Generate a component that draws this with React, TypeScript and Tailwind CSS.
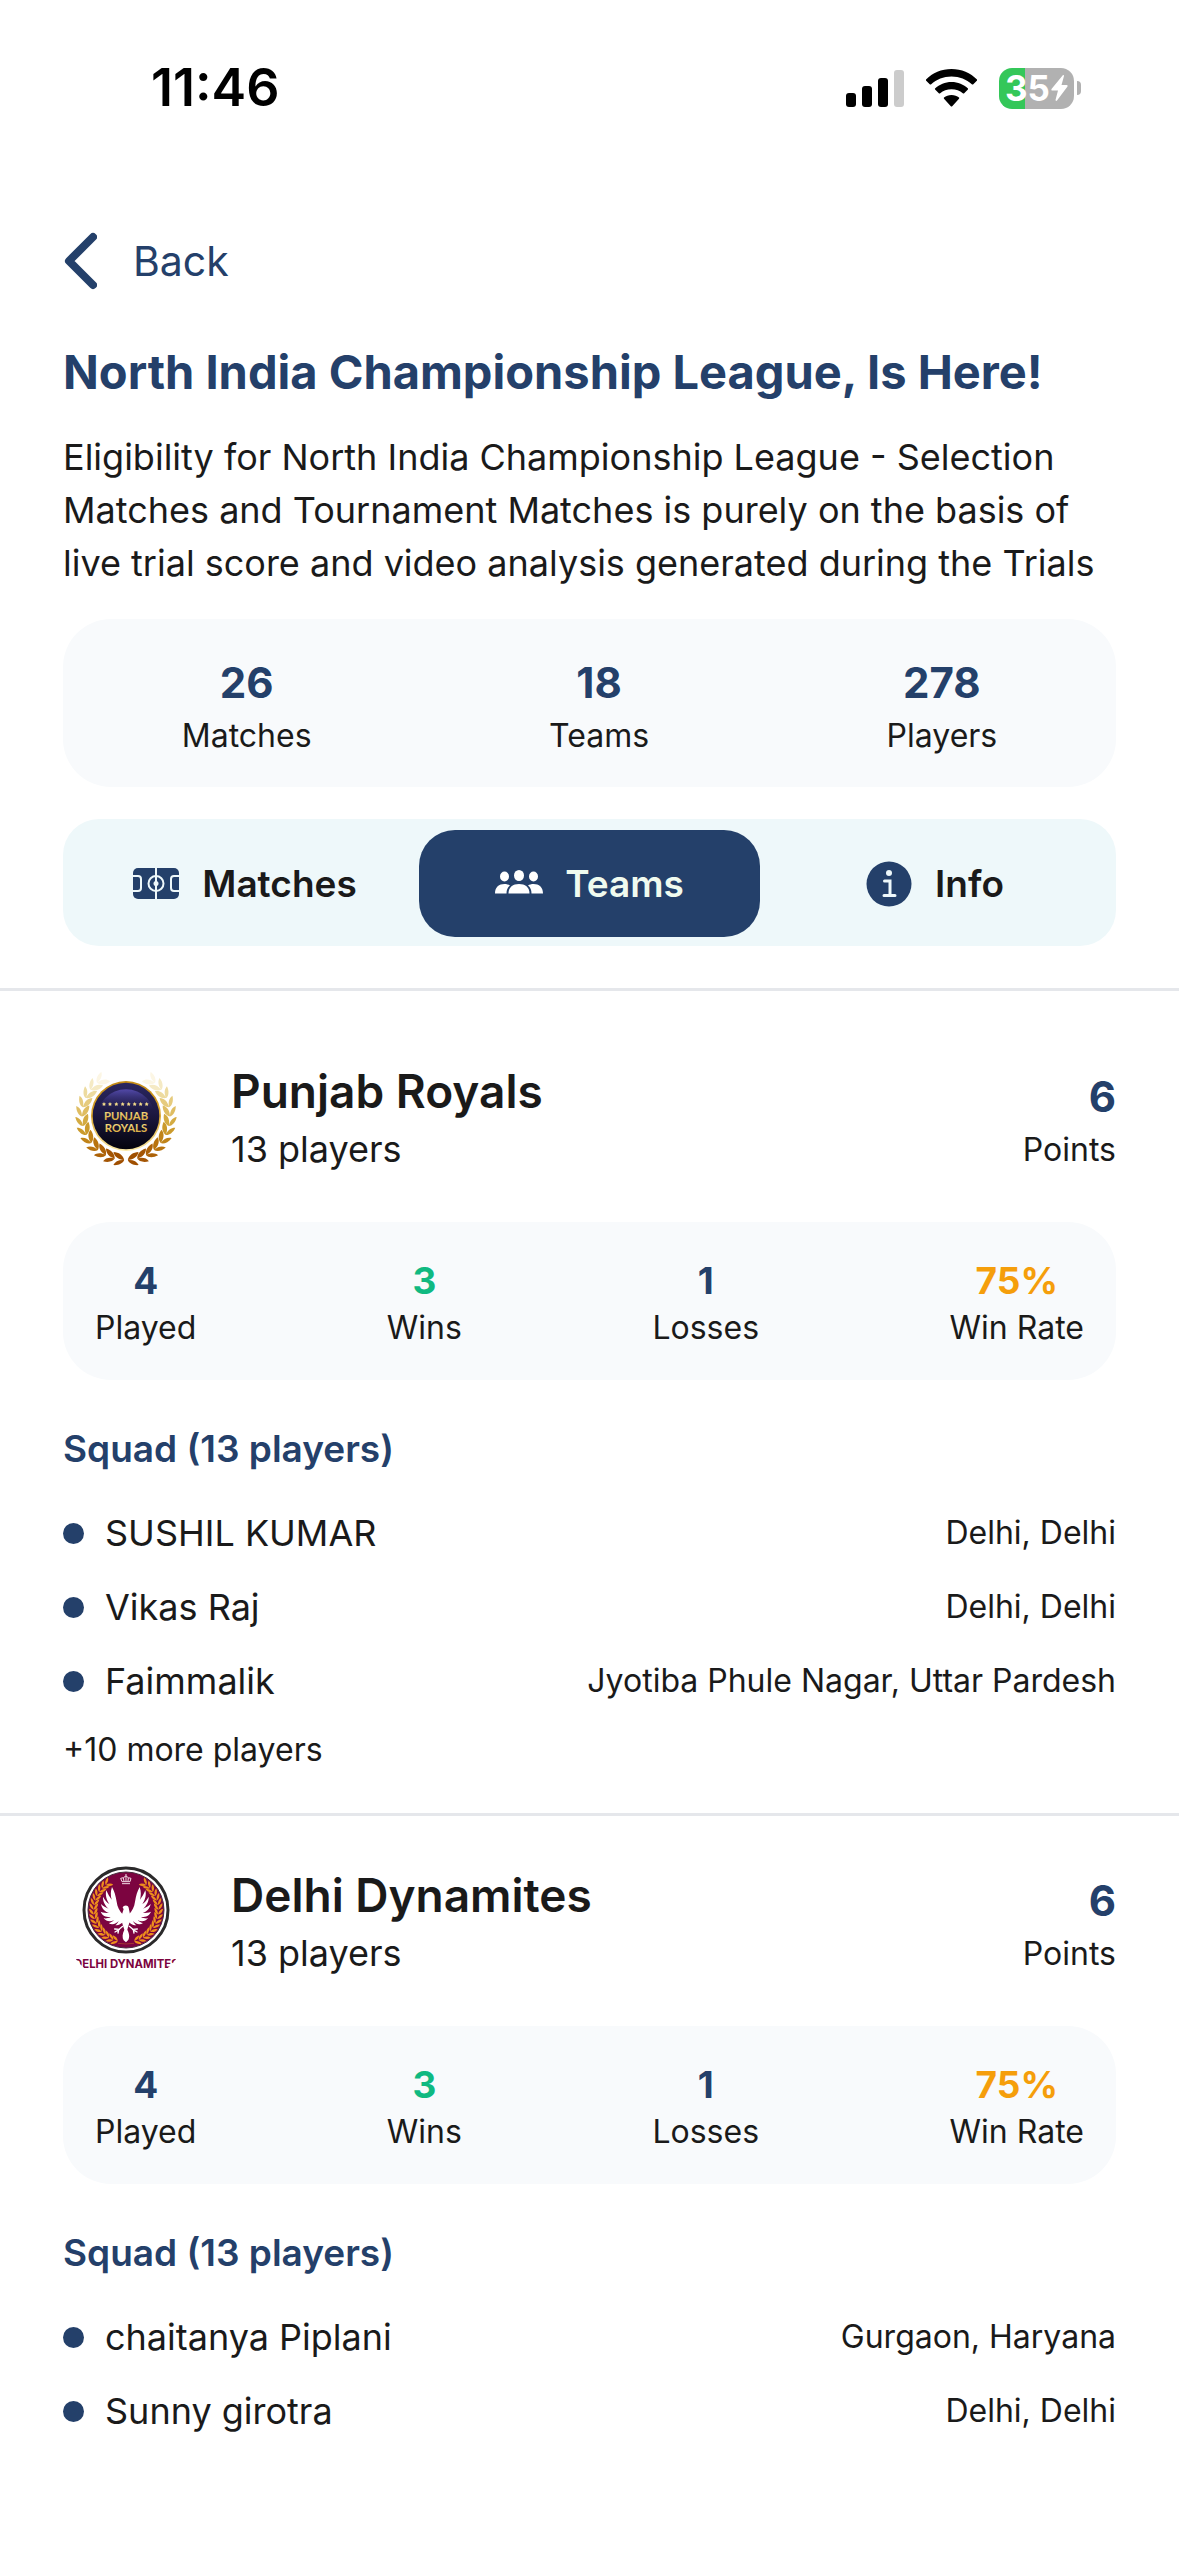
import { useState } from 'react';

interface Player {
    name: string;
    place: string;
}

interface Team {
    name: string;
    players: number;
    points: number;
    played: number;
    wins: number;
    losses: number;
    winRate: string;
    squad: Player[];
    more?: number;
    Logo: () => React.JSX.Element;
}

// leaves get their colour from their height in the wreath
const WREATH_SHADES = ['#a04f00', '#a45504', '#ad6208', '#b8730e', '#c08318', '#cb9a2c', '#d4ab42', '#dfbd62', '#e6cb7d', '#eddb9f', '#f5eac4', '#fcf6e4'];

const GOLD_LEAVES = 'M-6 0 C-2 -14 12 -22 28 -21 C24 -7 12 0 -6 0Z M-6 0 C-4 9 8 18 25 18 C21 7 10 0 -6 0Z';
const SMALL_LEAVES = 'M-2 0 C0 -8 8 -13 17 -13 C15 -6 8 -1 -2 0Z M-2 0 C0 8 8 13 17 13 C15 6 8 1 -2 0Z';

// one pair of leaves on a wreath, angle in degrees clockwise from the top
function LeafPair({ deg, cy, r, d, fill }: { deg: number; cy: number; r: number; d: string; fill: string }) {
    const a = (deg * Math.PI) / 180;
    const x = r * Math.sin(a);
    const y = cy - r * Math.cos(a);
    return (
        <g fill={fill}>
            <path d={d} transform={`translate(${198 + x} ${y}) rotate(${deg + 180})`} />
            <path d={d} transform={`translate(${198 - x} ${y}) scale(-1 1) rotate(${deg + 180})`} />
        </g>
    );
}

function PunjabLogo() {
    return (
        <svg className="w-[126px] h-[126px] shrink-0" viewBox="0 0 126 126" aria-hidden="true">
            <defs>
                <linearGradient id="royalRim" x1="0" y1="0" x2="0" y2="1">
                    <stop offset="0%" stopColor="#c48a12" />
                    <stop offset="50%" stopColor="#d9a52c" />
                    <stop offset="100%" stopColor="#fbe9a8" />
                </linearGradient>
                <linearGradient id="royalBlue" x1="0" y1="0" x2="0" y2="1">
                    <stop offset="0%" stopColor="#2a2660" />
                    <stop offset="45%" stopColor="#1d1942" />
                    <stop offset="100%" stopColor="#04030c" />
                </linearGradient>
                <linearGradient id="royalShine" x1="0" y1="0" x2="0" y2="1">
                    <stop offset="0%" stopColor="#5249a8" />
                    <stop offset="35%" stopColor="#2a2560" stopOpacity="0" />
                </linearGradient>
                <linearGradient id="royalText" x1="0" y1="0" x2="0" y2="1">
                    <stop offset="0%" stopColor="#f8e58e" />
                    <stop offset="100%" stopColor="#d8a437" />
                </linearGradient>
            </defs>
            <g transform="scale(0.33333) translate(-9 18)">
                {WREATH_SHADES.map((shade, i) => (
                    <LeafPair key={shade} deg={175 - i * 12.4} cy={168} r={132} d={GOLD_LEAVES} fill={shade} />
                ))}
                <circle cx="198" cy="168" r="105" fill="url(#royalRim)" />
                <circle cx="198" cy="168" r="100" fill="url(#royalBlue)" />
                <circle cx="198" cy="176" r="88" fill="url(#royalShine)" />
                <g fill="#f0d98a">
                    {[132, 150, 169, 188, 206, 224, 242, 260].map((x) => (
                        <path key={x} transform={`translate(${x} 132)`} d="M0 -6 L2 -2 L6 -1 L3 2 L4 6 L0 4 L-4 6 L-3 2 L-6 -1 L-2 -2Z" />
                    ))}
                </g>
                <g fill="url(#royalText)" fontFamily="Lato, sans-serif" fontWeight="700" fontSize="34" textAnchor="middle">
                    <text x="198" y="179">PUNJAB</text>
                    <text x="198" y="217">ROYALS</text>
                </g>
            </g>
        </svg>
    );
}

const WING = 'M190 180 C178 168 172 155 170 140 C167 122 163 108 156 96 C151 110 152 122 155 134 C149 126 144 118 139 106 C135 120 140 136 148 147 C140 142 134 134 129 125 C128 140 136 153 146 161 C138 158 129 153 123 147 C125 160 135 170 147 174 C138 174 130 173 122 170 C127 183 140 187 152 186 C145 190 138 191 131 190 C139 200 152 201 162 195 C157 200 152 203 146 204 C155 211 169 207 176 198 C173 204 170 208 166 211 C178 211 188 204 193 194 Z';

function DelhiLogo() {
    return (
        <svg className="w-[126px] h-[126px] shrink-0" viewBox="0 0 126 126" aria-hidden="true">
            <clipPath id="delhiClip">
                <circle cx="63" cy="63" r="63" />
            </clipPath>
            <g clipPath="url(#delhiClip)">
                <g transform="scale(0.33333) translate(-9 -9)">
                    <circle cx="198" cy="165" r="126" fill="#fff" stroke="#2b2a2b" strokeWidth="9" />
                    <circle cx="198" cy="165" r="114" fill="#7c0440" stroke="#45293a" strokeWidth="3" />
                    {Array.from({ length: 16 }, (_, i) => (
                        <LeafPair key={i} deg={164 - i * 8.4} cy={165} r={97} d={SMALL_LEAVES} fill="#ee8f1c" />
                    ))}
                    <path d="M174 265 Q198 269 222 265" fill="none" stroke="#b4502a" strokeWidth="2" />
                    {/* crown */}
                    <g fill="none" stroke="#f2dde6" strokeWidth="3">
                        <path d="M186 86 H210 M186 80 H210 L213 70 L205 68 L198 63 L190 68 L182 70 L186 80 M192 79 L190 69 M198 79 V64 M204 79 L205 69" />
                        <path d="M198 63 V57" />
                    </g>
                    {/* phoenix */}
                    <g fill="#fff">
                        <path d={WING} />
                        <path d={WING} transform="translate(395 0) scale(-1 1)" />
                        <path d="M188 158 C190 150 204 148 206 158 L210 178 C213 196 206 208 202 224 C209 238 209 248 204 256 L198 262 L191 256 C186 248 187 236 193 224 C188 208 182 196 186 178 L191 162Z" />
                    </g>
                    <g stroke="#fff" strokeWidth="4" strokeLinecap="round" fill="none">
                        <path d="M188 214 L174 226 M178 223 L164 222 M177 224 L165 231 M176 225 L174 234" />
                        <path d="M208 214 L222 226 M218 223 L232 222 M219 224 L231 231 M220 225 L222 234" />
                    </g>
                    <text x="199" y="340" fill="#7c0440" fontFamily="Inter, sans-serif" fontWeight="700" fontSize="34" textAnchor="middle">
                        DELHI DYNAMITES
                    </text>
                </g>
            </g>
        </svg>
    );
}

function PitchIcon() {
    return (
        <svg className="w-12 h-12" viewBox="0 0 48 48" aria-hidden="true">
            <rect x="1" y="8" width="46" height="31" rx="5" fill="#24406a" />
            <g fill="none" stroke="#eef8fa" strokeWidth="2">
                <path d="M24 8 V39 M1 16 H6 Q9 16 9 19 V28 Q9 31 6 31 H1 M47 16 H42 Q39 16 39 19 V28 Q39 31 42 31 H47" />
                <circle cx="24" cy="23.500" r="7.500" />
            </g>
            <circle cx="24" cy="23.500" r="2.500" fill="#eef8fa" />
        </svg>
    );
}

function GroupIcon() {
    return (
        <svg className="w-12 h-12" viewBox="0 0 48 48" fill="#fff" aria-hidden="true">
            <ellipse cx="9.500" cy="16.500" rx="4.500" ry="5" />
            <ellipse cx="38.500" cy="16.500" rx="4.500" ry="5" />
            <path d="M0 33.500 C0 27 4 24 9.500 24 C11.500 24 13.500 24.500 15 25.500 C12.500 27.500 11.500 30 11.500 33.500Z" />
            <path d="M48 33.500 C48 27 44 24 38.500 24 C36.500 24 34.500 24.500 33 25.500 C35.500 27.500 36.500 30 36.500 33.500Z" />
            <ellipse cx="24" cy="15.500" rx="5" ry="5.500" />
            <path d="M13.500 33.500 C13.500 27 18 24 24 24 C30 24 34.500 27 34.500 33.500Z" />
        </svg>
    );
}

function InfoIcon() {
    return (
        <svg className="w-12 h-12" viewBox="0 0 48 48" aria-hidden="true">
            <circle cx="24" cy="24" r="22.500" fill="#24406a" />
            <circle cx="24" cy="13" r="3" fill="#eef8fa" />
            <path d="M19.500 21 H25 V35.500 M19 35.500 H30" fill="none" stroke="#eef8fa" strokeWidth="3" strokeLinecap="round" />
        </svg>
    );
}

function StatusBar() {
    return (
        <div className="flex items-center justify-between pt-[58px] pl-[151px] pr-[98px] text-black">
            <span className="text-[52px] leading-[60px] font-semibold">11:46</span>
            <div className="flex items-center gap-[22px]">
                <svg className="w-[58px] h-[38px]" viewBox="0 0 58 38" aria-hidden="true">
                    <rect x="0" y="24" width="10" height="14" rx="3" />
                    <rect x="16" y="17" width="10" height="21" rx="3" />
                    <rect x="32" y="9" width="10" height="29" rx="3" />
                    <rect x="48" y="1" width="10" height="37" rx="3" fill="#cccccc" />
                </svg>
                <svg className="w-[51px] h-[38px]" viewBox="0 0 51 38" aria-hidden="true">
                    <path d="M25.500 0 C35.500 0 44.500 4 51 10.500 Q51.300 11.200 50.800 11.700 L47.300 15.300 Q46.500 15.800 45.800 15.300 C40.500 10.500 33.500 7.500 25.500 7.500 C17.500 7.500 10.500 10.500 5.200 15.300 Q4.500 15.800 3.700 15.300 L0.200 11.700 Q-0.300 11.200 0 10.500 C6.500 4 15.500 0 25.500 0Z" />
                    <path d="M25.500 13 C32 13 37.500 15.500 42 19.400 Q42.300 20 41.900 20.500 L38.200 24.200 Q37.500 24.700 36.800 24.200 C33.800 21.800 30 20.300 25.500 20.300 C21 20.300 17.200 21.800 14.200 24.200 Q13.500 24.700 12.800 24.200 L9.100 20.500 Q8.700 20 9 19.400 C13.500 15.500 19 13 25.500 13Z" />
                    <path d="M25.500 26 C28.500 26 31 27 33 28.600 Q33.500 29.200 33 29.800 L26.200 37.200 Q25.500 38 24.800 37.200 L18 29.800 Q17.500 29.200 18 28.600 C20 27 22.500 26 25.500 26Z" />
                </svg>
                <div className="flex items-center gap-[3px]">
                    <div className="flex items-center justify-center gap-px w-[75px] h-[41px] rounded-[13px] bg-[linear-gradient(90deg,#34c759_26px,#b1b1b1_26px)] text-white">
                        <span className="text-[35px] leading-[41px] font-bold">35</span>
                        <svg className="w-[17px] h-[26px]" viewBox="0 0 17 26" fill="#fff" aria-hidden="true">
                            <path d="M12 0 L0.500 14 Q0 15.500 1.500 15.500 H7 L4.500 25 Q5 26.500 6 25.500 L16.500 11.500 Q17 10 15.500 10 H10.500 L13 1 Q12.800 -0.500 12 0Z" />
                        </svg>
                    </div>
                    <div className="w-1 h-[14px] rounded-r-full bg-[#b1b1b1]" />
                </div>
            </div>
        </div>
    );
}

const totals = [
    { value: 26, label: 'Matches' },
    { value: 18, label: 'Teams' },
    { value: 278, label: 'Players' },
];

const tabs = [
    { label: 'Matches', Icon: PitchIcon },
    { label: 'Teams', Icon: GroupIcon },
    { label: 'Info', Icon: InfoIcon },
];

const teams: Team[] = [
    {
        name: 'Punjab Royals',
        players: 13,
        points: 6,
        played: 4,
        wins: 3,
        losses: 1,
        winRate: '75%',
        squad: [
            { name: 'SUSHIL KUMAR', place: 'Delhi, Delhi' },
            { name: 'Vikas Raj', place: 'Delhi, Delhi' },
            { name: 'Faimmalik', place: 'Jyotiba Phule Nagar, Uttar Pardesh' },
        ],
        more: 10,
        Logo: PunjabLogo,
    },
    {
        name: 'Delhi Dynamites',
        players: 13,
        points: 6,
        played: 4,
        wins: 3,
        losses: 1,
        winRate: '75%',
        squad: [
            { name: 'chaitanya Piplani', place: 'Gurgaon, Haryana' },
            { name: 'Sunny girotra', place: 'Delhi, Delhi' },
        ],
        Logo: DelhiLogo,
    },
];

function TeamStat({ value, label, color }: { value: number | string; label: string; color: string }) {
    return (
        <div className="flex flex-col items-center gap-[2px]">
            <span className={`text-[37px] leading-[48px] font-bold ${color}`}>{value}</span>
            <span className="text-[32px] leading-[42px]">{label}</span>
        </div>
    );
}

function TeamSection({ team }: { team: Team }) {
    return (
        <section className="px-[63px] pt-[42px] pb-[42px]">
            <div className="flex items-center gap-[42px]">
                <team.Logo />
                <div className="flex flex-col gap-1 flex-1">
                    <h2 className="text-[46px] leading-[60px] font-semibold">{team.name}</h2>
                    <p className="text-[36px] leading-[48px]">{team.players} players</p>
                </div>
                <div className="flex flex-col items-end gap-[2px] pt-[3px]">
                    <span className="text-[42px] leading-[60px] font-bold text-[#24406a]">{team.points}</span>
                    <span className="text-[32px] leading-[42px]">Points</span>
                </div>
            </div>

            <div className="flex justify-between mt-[42px] px-8 pt-[35px] pb-[31px] rounded-[48px] bg-[#f8fafc]">
                <TeamStat value={team.played} label="Played" color="text-[#24406a]" />
                <TeamStat value={team.wins} label="Wins" color="text-[#10b981]" />
                <TeamStat value={team.losses} label="Losses" color="text-[#24406a]" />
                <TeamStat value={team.winRate} label="Win Rate" color="text-[#f59e0b]" />
            </div>

            <h3 className="mt-[45px] text-[37px] leading-[48px] font-semibold text-[#24406a]">
                Squad ({team.players} players)
            </h3>
            <ul className="flex flex-col gap-6 mt-[35px]">
                {team.squad.map((player) => (
                    <li key={player.name} className="flex items-center">
                        <span className="w-[21px] h-[21px] mr-[21px] rounded-full bg-[#24406a]" />
                        <span className="flex-1 text-[36px] leading-[50px]">{player.name}</span>
                        <span className="text-[32px] leading-[42px]">{player.place}</span>
                    </li>
                ))}
            </ul>
            {team.more && <p className="mt-[23px] text-[32px] leading-[42px]">+{team.more} more players</p>}
        </section>
    );
}

export default function App() {
    const [active, setActive] = useState('Teams');

    return (
        <div className="min-h-screen bg-white text-[#1a1a1a] font-['Inter',sans-serif]">
            <StatusBar />

            <header className="px-[63px] pt-[113px] pb-[42px]">
                <button type="button" className="flex items-center gap-[36px] text-[#24406a]">
                    <svg className="w-[34px] h-[60px]" viewBox="0 0 34 60" fill="none" stroke="currentColor" strokeWidth="8" strokeLinecap="round" strokeLinejoin="round" aria-hidden="true">
                        <path d="M30 6 L6 30 L30 54" />
                    </svg>
                    <span className="text-[41px] leading-[60px]">Back</span>
                </button>

                <h1 className="mt-[51px] text-[47px] leading-[60px] font-bold text-[#24406a]">
                    North India Championship League, Is Here!
                </h1>
                <p className="mt-[29px] text-[36px] leading-[53px]">
                    Eligibility for North India Championship League - Selection Matches and Tournament Matches is purely on the basis of live trial score and video analysis generated during the Trials
                </p>

                <div className="flex justify-around mt-[29px] pt-[34px] pb-[30px] rounded-[48px] bg-[#f8fafc]">
                    {totals.map(({ value, label }) => (
                        <div key={label} className="flex flex-col items-center gap-[2px]">
                            <span className="text-[42px] leading-[60px] font-bold text-[#24406a]">{value}</span>
                            <span className="text-[32px] leading-[42px]">{label}</span>
                        </div>
                    ))}
                </div>

                <nav className="grid grid-cols-3 gap-1 mt-8 px-[11px] pt-[11px] pb-[9px] rounded-[36px] bg-[#eef8fa]">
                    {tabs.map(({ label, Icon }) => (
                        <button
                            key={label}
                            type="button"
                            onClick={() => setActive(label)}
                            className={`flex items-center justify-center gap-[22px] h-[107px] rounded-[36px] text-[37px] leading-[48px] font-semibold ${active === label ? 'bg-[#24406a] text-[#f0fbef]' : ''}`}
                        >
                            <Icon />
                            {label}
                        </button>
                    ))}
                </nav>
            </header>

            <main className="border-t-[3px] border-[#e5e7eb] pt-[21px] divide-y-[3px] divide-[#e5e7eb]">
                {teams.map((team) => (
                    <TeamSection key={team.name} team={team} />
                ))}
            </main>
        </div>
    );
}
